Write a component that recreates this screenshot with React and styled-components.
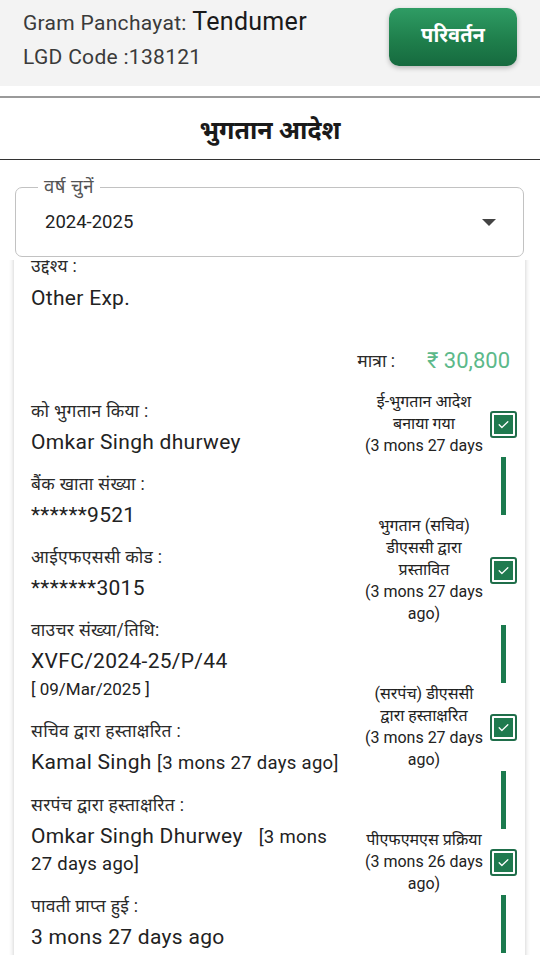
import React from "react"
import styled, { createGlobalStyle } from "styled-components"

const GlobalStyle = createGlobalStyle`
  html, body {
    margin: 0;
    padding: 0;
    background: #ffffff;
  }
  body {
    font-family: Roboto, "Noto Sans", "Noto Sans Devanagari", "Lohit Devanagari", sans-serif;
    color: #222222;
  }
`

const Page = styled.div`
  width: 540px;
  height: 955px;
  display: flex;
  flex-direction: column;
  overflow: hidden;
  background: #ffffff;
`

const Header = styled.header`
  height: 86px;
  box-sizing: border-box;
  background: #f3f3f3;
  display: flex;
  justify-content: space-between;
  align-items: flex-start;
  padding: 8px 23px 0 23px;
`

const HeaderInfo = styled.div`
  display: flex;
  flex-direction: column;
`

const InfoLine = styled.div`
  font-size: 21px;
  line-height: 28px;
  letter-spacing: 0.3px;
  color: #3a3a3a;
  margin-top: ${props => props.gap || 0}px;
`

const InfoStrong = styled.span`
  font-size: 25px;
  color: #1a1a1a;
`

const ChangeButton = styled.button`
  width: 128px;
  height: 58px;
  border: none;
  border-radius: 10px;
  background: linear-gradient(180deg, #2f9c64 0%, #1f7f4c 55%, #166a3f 100%);
  box-shadow: 0 2px 5px rgba(0, 0, 0, 0.25);
  color: #ffffff;
  font-family: "Noto Sans Devanagari", "Noto Sans", sans-serif;
  font-size: 20px;
  font-weight: 700;
  cursor: pointer;
`

const Divider = styled.div`
  height: ${props => props.thick || 1}px;
  background: ${props => props.color || "#333"};
  margin-top: ${props => props.top || 0}px;
`

const TitleBar = styled.div`
  height: 61px;
  display: flex;
  align-items: center;
  justify-content: center;
  font-size: 25px;
  font-weight: 700;
  color: #1a1a1a;
`

const SelectBox = styled.div`
  position: relative;
  margin: 27px 16px 0 15px;
  height: 70px;
  box-sizing: border-box;
  border: 1px solid #c2c2c2;
  border-radius: 7px;
  display: flex;
  align-items: center;
  justify-content: space-between;
  padding: 0 27px 0 29px;
`

const Legend = styled.span`
  position: absolute;
  top: -13px;
  left: 22px;
  padding: 0 6px;
  background: #ffffff;
  font-size: 18.5px;
  line-height: 24px;
  letter-spacing: 0.5px;
  color: #555555;
`

const SelectValue = styled.span`
  font-size: 18.5px;
  color: #222222;
`

const Caret = styled.span`
  width: 0;
  height: 0;
  border-left: 7px solid transparent;
  border-right: 7px solid transparent;
  border-top: 7px solid #444444;
`

const ScrollArea = styled.div`
  flex: 1;
  overflow: hidden;
  margin-top: 3px;
  padding: 0 15px 0 14px;
`

const Card = styled.div`
  margin-top: -16px;
  background: #ffffff;
  box-shadow: 0 1px 5px rgba(0, 0, 0, 0.22);
  padding: 10px 8px 20px 17px;
`

const Label = styled.div`
  font-size: 17.5px;
  line-height: 24px;
  letter-spacing: 0.3px;
  color: #2a2a2a;
`

const Value = styled.div`
  font-size: 21px;
  line-height: 26px;
  margin-top: ${props => props.top ?? 6}px;
  color: #222222;
  letter-spacing: 0.3px;
`

const Small = styled.span`
  font-size: 18.5px;
  line-height: 26px;
  margin-left: ${props => props.space || 0}px;
`

const SubValue = styled.div`
  font-size: 17px;
  line-height: 26px;
  margin-top: 2px;
`

const AmountRow = styled.div`
  display: flex;
  justify-content: flex-end;
  align-items: center;
  gap: 32px;
  margin-top: 35px;
  padding-right: 7px;
  height: 28px;
`

const AmountLabel = styled.span`
  font-size: 17.5px;
  color: #2a2a2a;
`

const Amount = styled.span`
  font-size: 22px;
  color: #5cb98a;
`

const DetailGrid = styled.div`
  display: grid;
  grid-template-columns: 315px 1fr;
  column-gap: 12px;
  margin-top: 12px;
`

const Details = styled.div`
  display: flex;
  flex-direction: column;
  padding-top: 13px;
`

const Field = styled.div`
  margin-bottom: 17px;
`

const Timeline = styled.div`
  display: flex;
  flex-direction: column;
  padding-top: 5px;
`

const Step = styled.div`
  display: flex;
  align-items: center;
`

const StepText = styled.div`
  flex: 1;
  text-align: center;
  font-size: 16px;
  line-height: 22px;
  color: #222222;
`

const CheckOuter = styled.div`
  width: 27px;
  height: 27px;
  box-sizing: border-box;
  border: 2px solid #1f6e4a;
  border-radius: 3px;
  padding: 2px;
  flex-shrink: 0;
`

const CheckInner = styled.div`
  width: 100%;
  height: 100%;
  background: #1f7a4f;
  display: flex;
  align-items: center;
  justify-content: center;
`

const Connector = styled.div`
  display: flex;
  justify-content: flex-end;
`

const BarSlot = styled.div`
  width: 27px;
  display: flex;
  justify-content: center;
`

const Bar = styled.div`
  width: 5px;
  height: 58px;
  background: #1b7a4e;
`

const CheckBox = () => (
  <CheckOuter>
    <CheckInner>
      <svg width="13" height="13" viewBox="0 0 24 24" fill="none">
        <path d="M4 12.5l5 5L20 7" stroke="#ffffff" strokeWidth="2.4" strokeLinecap="round" strokeLinejoin="round" />
      </svg>
    </CheckInner>
  </CheckOuter>
)

const steps = [
  ["ई-भुगतान आदेश", "बनाया गया", "(3 mons 27 days"],
  ["भुगतान (सचिव)", "डीएससी द्वारा", "प्रस्तावित", "(3 mons 27 days", "ago)"],
  ["(सरपंच) डीएससी", "द्वारा हस्ताक्षरित", "(3 mons 27 days", "ago)"],
  ["पीएफएमएस प्रक्रिया", "(3 mons 26 days", "ago)"]
]

const App = () => {
  return (
    <Page>
      <GlobalStyle />
      <Header>
        <HeaderInfo>
          <InfoLine>Gram Panchayat: <InfoStrong>Tendumer</InfoStrong></InfoLine>
          <InfoLine gap={6}>LGD Code :138121</InfoLine>
        </HeaderInfo>
        <ChangeButton>परिवर्तन</ChangeButton>
      </Header>
      <Divider thick={2} color="#9a9a9a" top={10} />
      <TitleBar>भुगतान आदेश</TitleBar>
      <Divider thick={1} color="#333" />
      <SelectBox>
        <Legend>वर्ष चुनें</Legend>
        <SelectValue>2024-2025</SelectValue>
        <Caret />
      </SelectBox>
      <ScrollArea>
        <Card>
          <Label>उद्देश्य :</Label>
          <Value top={7}>Other Exp.</Value>
          <AmountRow>
            <AmountLabel>मात्रा :</AmountLabel>
            <Amount>₹ 30,800</Amount>
          </AmountRow>
          <DetailGrid>
            <Details>
              <Field>
                <Label>को भुगतान किया :</Label>
                <Value>Omkar Singh dhurwey</Value>
              </Field>
              <Field>
                <Label>बैंक खाता संख्या :</Label>
                <Value>******9521</Value>
              </Field>
              <Field>
                <Label>आईएफएससी कोड :</Label>
                <Value>*******3015</Value>
              </Field>
              <Field>
                <Label>वाउचर संख्या/तिथि:</Label>
                <Value>XVFC/2024-25/P/44</Value>
                <SubValue>[ 09/Mar/2025 ]</SubValue>
              </Field>
              <Field>
                <Label>सचिव द्वारा हस्ताक्षरित :</Label>
                <Value>Kamal Singh <Small>[3 mons 27 days ago]</Small></Value>
              </Field>
              <Field>
                <Label>सरपंच द्वारा हस्ताक्षरित :</Label>
                <Value>Omkar Singh Dhurwey<Small space={16}>[3 mons 27 days ago]</Small></Value>
              </Field>
              <Field>
                <Label>पावती प्राप्त हुई :</Label>
                <Value>3 mons 27 days ago</Value>
              </Field>
            </Details>
            <Timeline>
              {steps.map((lines, i) => (
                <React.Fragment key={i}>
                  <Step>
                    <StepText>
                      {lines.map((line, j) => <div key={j}>{line}</div>)}
                    </StepText>
                    <CheckBox />
                  </Step>
                  <Connector>
                    <BarSlot><Bar /></BarSlot>
                  </Connector>
                </React.Fragment>
              ))}
            </Timeline>
          </DetailGrid>
        </Card>
      </ScrollArea>
    </Page>
  )
}

export default App
